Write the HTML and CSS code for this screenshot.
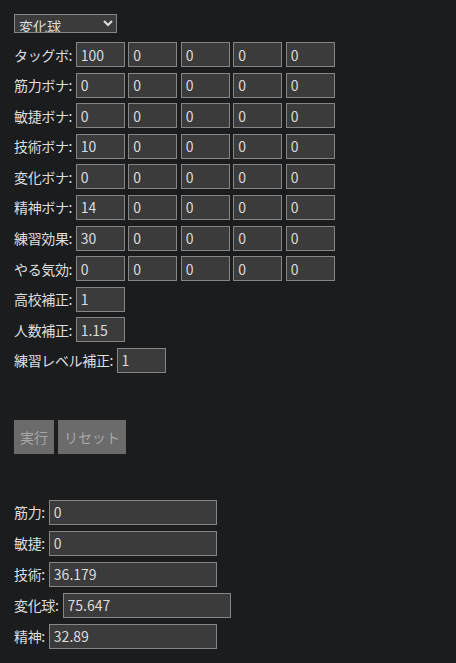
FILE: index.html
```html
<!DOCTYPE html>
<html lang="ja">
<head>
<meta charset="utf-8">
<link rel="stylesheet" href="styles.css">
</head>
<body>
<div class="page">
  <select class="kind">
    <option>変化球</option>
    <option>筋力</option>
  </select>

  <div class="grid">
    <div class="row"><span class="lbl">タッグボ:</span><input class="cell" value="100"><input class="cell" value="0"><input class="cell" value="0"><input class="cell" value="0"><input class="cell" value="0"></div>
    <div class="row"><span class="lbl">筋力ボナ:</span><input class="cell" value="0"><input class="cell" value="0"><input class="cell" value="0"><input class="cell" value="0"><input class="cell" value="0"></div>
    <div class="row"><span class="lbl">敏捷ボナ:</span><input class="cell" value="0"><input class="cell" value="0"><input class="cell" value="0"><input class="cell" value="0"><input class="cell" value="0"></div>
    <div class="row"><span class="lbl">技術ボナ:</span><input class="cell" value="10"><input class="cell" value="0"><input class="cell" value="0"><input class="cell" value="0"><input class="cell" value="0"></div>
    <div class="row"><span class="lbl">変化ボナ:</span><input class="cell" value="0"><input class="cell" value="0"><input class="cell" value="0"><input class="cell" value="0"><input class="cell" value="0"></div>
    <div class="row"><span class="lbl">精神ボナ:</span><input class="cell" value="14"><input class="cell" value="0"><input class="cell" value="0"><input class="cell" value="0"><input class="cell" value="0"></div>
    <div class="row"><span class="lbl">練習効果:</span><input class="cell" value="30"><input class="cell" value="0"><input class="cell" value="0"><input class="cell" value="0"><input class="cell" value="0"></div>
    <div class="row"><span class="lbl">やる気効:</span><input class="cell" value="0"><input class="cell" value="0"><input class="cell" value="0"><input class="cell" value="0"><input class="cell" value="0"></div>
    <div class="row"><span class="lbl">高校補正:</span><input class="cell" value="1"></div>
    <div class="row"><span class="lbl">人数補正:</span><input class="cell" value="1.15"></div>
    <div class="row"><span class="lbl">練習レベル補正:</span><input class="cell" value="1"></div>
  </div>

  <div class="actions">
    <button class="btn">実行</button>
    <button class="btn">リセット</button>
  </div>

  <div class="results">
    <div class="row"><span class="lbl">筋力:</span><input class="out" value="0"></div>
    <div class="row"><span class="lbl">敏捷:</span><input class="out" value="0"></div>
    <div class="row"><span class="lbl">技術:</span><input class="out" value="36.179"></div>
    <div class="row"><span class="lbl">変化球:</span><input class="out" value="75.647"></div>
    <div class="row"><span class="lbl">精神:</span><input class="out" value="32.89"></div>
  </div>
</div>
</body>
</html>
```

FILE: styles.css
```css
html, body {
  margin: 0;
  padding: 0;
  background: #1b1c1e;
  color-scheme: dark;
}

.page {
  padding: 14px 14px 0 14px;
  font-family: "Noto Sans CJK JP", "Noto Sans", sans-serif;
  font-size: 14px;
  color: #dedede;
  display: flex;
  flex-direction: column;
  align-items: flex-start;
}

.kind {
  box-sizing: border-box;
  width: 103px;
  height: 19px;
  margin: 0;
  padding: 0;
  font-family: "Noto Sans CJK JP", sans-serif;
  font-size: 14px;
  line-height: 17px;
  color: #dedede;
  background-color: #3b3b3b;
  border: 1px solid #858585;
  border-radius: 0;
}

.grid {
  margin-top: 9px;
  display: flex;
  flex-direction: column;
  gap: 5.6px;
}

.row {
  display: flex;
  align-items: center;
  gap: 3.5px;
  height: 25px;
}

.lbl {
  white-space: nowrap;
  line-height: 20px;
  letter-spacing: -0.35px;
}

.cell, .out {
  box-sizing: border-box;
  height: 25px;
  margin: 0;
  padding: 0 4px;
  font-family: "Noto Sans CJK JP", "Noto Sans", sans-serif;
  font-size: 14px;
  color: #dcdcdc;
  background: #3b3b3b;
  border: 1px solid #858585;
  border-radius: 0;
  outline: none;
}

.cell {
  width: 49px;
}

.results .row {
  gap: 4px;
}

.out {
  width: 168px;
  height: 24.5px;
}

.actions {
  margin-top: 47px;
  display: flex;
  gap: 4px;
}

.btn {
  box-sizing: border-box;
  height: 34px;
  padding: 0 5px;
  margin: 0;
  font-family: "Noto Sans CJK JP", sans-serif;
  font-size: 14px;
  color: #a8a8a8;
  background: #6b6b6b;
  border: 1px solid #6b6b6b;
  border-radius: 0;
}

.results {
  margin-top: 46px;
  display: flex;
  flex-direction: column;
  gap: 6px;
}
```
